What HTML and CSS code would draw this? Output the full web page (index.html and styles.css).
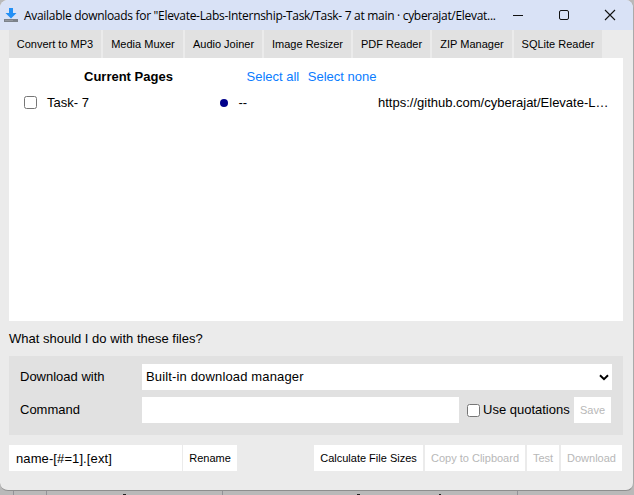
FILE: index.html
```html
<!DOCTYPE html>
<html lang="en">
<head>
<meta charset="utf-8">
<title>Available downloads</title>
<link rel="stylesheet" href="styles.css">
</head>
<body>
<main class="window">
  <header class="titlebar">
    <svg class="app-icon" width="14" height="14" viewBox="0 0 14 14"><path d="M5 0h4v5h3.500L7 10.500 1.500 5H5z" fill="#2490f5"/><path d="M0 11h14v3H0z" fill="#7c828a"/><path d="M1 12h8v1H1z" fill="#93989f"/></svg>
    <h1 class="title">Available downloads for "Elevate-Labs-Internship-Task/Task- 7 at main · cyberajat/Elevat...</h1>
    <div class="controls">
      <svg width="46" height="30" viewBox="0 0 46 30"><path d="M17 15.500h10" stroke="#111"/></svg>
      <svg width="46" height="30" viewBox="0 0 46 30"><rect x="17.500" y="10.500" width="9" height="9" rx="1.500" fill="none" stroke="#111"/></svg>
      <svg width="46" height="30" viewBox="0 0 46 30"><path d="M17 10l10 10M27 10L17 20" stroke="#111" stroke-width="1.100"/></svg>
    </div>
  </header>
  <nav class="tabs">
    <a class="tab t1">Convert to MP3</a><a class="tab t2">Media Muxer</a><a class="tab t3">Audio Joiner</a><a class="tab t4">Image Resizer</a><a class="tab t5">PDF Reader</a><a class="tab t6">ZIP Manager</a><a class="tab t7">SQLite Reader</a>
  </nav>
  <section class="files">
    <div class="files-head">
      <strong class="files-title">Current Pages</strong>
      <a class="link">Select all</a><a class="link">Select none</a>
    </div>
    <div class="file">
      <input class="check" type="checkbox">
      <span class="file-name">Task- 7</span>
      <i class="dot"></i>
      <span class="file-size">--</span>
      <span class="file-url">https://github.com/cyberajat/Elevate-L…</span>
    </div>
  </section>
  <p class="question">What should I do with these files?</p>
  <section class="options">
    <div class="row">
      <label class="label">Download with</label>
      <div class="select"><span>Built-in download manager</span><svg width="10" height="7" viewBox="0 0 10 7"><path d="M1 1.200l4 4 4-4" fill="none" stroke="#000" stroke-width="2"/></svg></div>
    </div>
    <div class="row">
      <label class="label">Command</label>
      <input class="field command" type="text">
      <label class="quote"><input class="check" type="checkbox"><span>Use quotations</span></label>
      <button class="btn save" disabled>Save</button>
    </div>
  </section>
  <footer class="footer">
    <input class="field mask" type="text" value="name-[#=1].[ext]">
    <button class="btn rename">Rename</button>
    <div class="actions">
      <button class="btn calc">Calculate File Sizes</button>
      <button class="btn copy" disabled>Copy to Clipboard</button>
      <button class="btn test" disabled>Test</button>
      <button class="btn download" disabled>Download</button>
    </div>
  </footer>
</main>
<div class="backdrop"><i></i><i></i><i></i><i></i><svg class="specks" width="634" height="4"><path d="M123 3h3v1h-3zM357 3h3v1h-3zM439 3h2v1h-2z" fill="#222"/></svg></div>
</body>
</html>
```
FILE: styles.css
```css
* { box-sizing: border-box; }
body {
  margin: 0;
  width: 634px;
  height: 495px;
  overflow: hidden;
  background: #b9b9b9;
  color: #000;
  font: 13px/16px "Liberation Sans", Arial, sans-serif;
}
.window {
  width: 634px;
  height: 491px;
  border-right: 1px solid #aaa;
  border-bottom: 1px solid #8e8e8e;
  border-radius: 8px;
  background: #ebebeb;
  overflow: hidden;
}
.titlebar {
  display: flex;
  align-items: center;
  height: 30px;
  padding-left: 4px;
  background: #d9e2f6;
}
.app-icon { flex: none; margin-right: 6px; }
.title {
  flex: none;
  width: 472px;
  margin: 0;
  font: 12px/30px "Open Sans", sans-serif;
  padding-top: 1px;
  letter-spacing: -0.300px;
  white-space: nowrap;
}
.controls { display: flex; flex: none; }
.controls svg { flex: none; }
.tabs { display: flex; gap: 2px; height: 28px; padding-left: 9px; }
.tab {
  background: #e1e1e1;
  font-size: 11px;
  line-height: 28px;
  text-align: center;
  white-space: nowrap;
}
.t1 { width: 92px; }
.t2 { width: 80px; }
.t3 { width: 77px; }
.t4 { width: 87px; }
.t5 { width: 77px; }
.t6 { width: 80px; }
.t7 { width: 88px; }
.files { height: 263px; margin: 0 10px 0 9px; padding: 11px 15px; background: #fff; }
.files-head { display: flex; height: 16px; }
.files-title { width: 222.500px; padding-left: 60px; }
.link { margin-right: 8.500px; color: #0a7cff; }
.file { display: flex; align-items: center; height: 16px; margin-top: 10px; }
.file > * { flex: none; }
.check { flex: none; width: 13px; height: 13px; margin: 0; }
.file .check { margin-top: -2px; }
.file-name { width: 173px; margin-left: 10px; }
.dot { width: 8px; height: 8px; margin-top: -1px; border-radius: 50%; background: #00008b; }
.file-size { width: 139.500px; margin-left: 10.500px; }
.file-url { white-space: nowrap; }
.question { margin: 10px 9px 9px; }
.options {
  display: flex;
  flex-direction: column;
  gap: 7px;
  height: 79px;
  margin: 0 10px 0 9px;
  padding: 8px 11px;
  background: #e1e1e1;
}
.row { display: flex; align-items: center; height: 26px; }
.label { width: 122px; }
.select {
  display: flex;
  align-items: center;
  justify-content: space-between;
  width: 470px;
  height: 26px;
  padding: 0 3px 0 4px;
  background: #fff;
}
.select span { letter-spacing: 0.150px; }
.field { height: 26px; border: 0; background: #fff; font: inherit; color: #000; }
.command { width: 317px; }
.quote { display: flex; align-items: center; gap: 3px; width: 107px; margin-left: 8px; white-space: nowrap; }
.btn {
  flex: none;
  height: 26px;
  padding: 0;
  border: 0;
  background: #fff;
  color: #000;
  font: 11px/26px "Liberation Sans", Arial, sans-serif;
  white-space: nowrap;
}
.btn:disabled { color: #b8b8b8; }
.save { width: 37px; }
.footer { display: flex; margin: 10px 11px 0 9px; }
.mask { width: 173px; padding: 0 7px; letter-spacing: 0.100px; }
.rename { width: 54px; margin-left: 1px; }
.actions { display: flex; gap: 2px; margin-left: auto; }
.calc { width: 109px; }
.copy { width: 100px; }
.test { width: 32px; }
.download { width: 61px; }
.backdrop { position: relative; display: flex; height: 4px; }
.backdrop i { border-right: 1px solid #929298; }
.backdrop i:nth-child(1) { width: 14px; }
.backdrop i:nth-child(2) { width: 33px; }
.backdrop i:nth-child(3) { width: 176px; }
.backdrop i:nth-child(4) { width: 295px; }
.specks { position: absolute; top: 0; left: 0; }
```
